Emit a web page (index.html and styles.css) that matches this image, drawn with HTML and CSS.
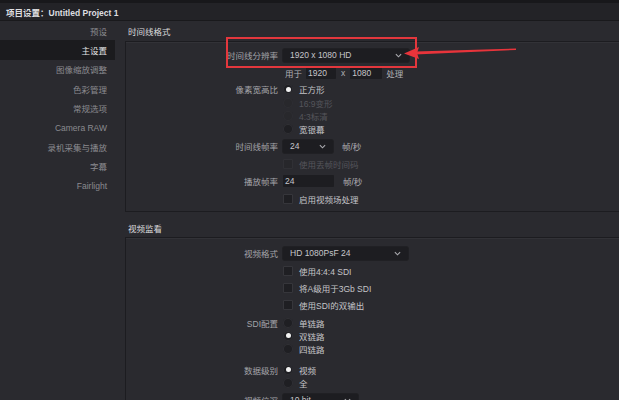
FILE: index.html
```html
<!DOCTYPE html>
<html lang="zh">
<head>
<meta charset="utf-8">
<link rel="stylesheet" href="styles.css">
</head>
<body>
<div class="app">
  <div class="topstrip"></div>
  <header class="titlebar"><span class="title">项目设置：Untitled Project 1</span></header>
  <div class="body">
    <nav class="sidebar">
      <div class="nav-item">预设</div>
      <div class="nav-item active">主设置</div>
      <div class="nav-item">图像缩放调整</div>
      <div class="nav-item">色彩管理</div>
      <div class="nav-item">常规选项</div>
      <div class="nav-item">Camera RAW</div>
      <div class="nav-item">录机采集与播放</div>
      <div class="nav-item">字幕</div>
      <div class="nav-item">Fairlight</div>
    </nav>
    <main class="content">
      <div class="section-head">时间线格式</div>
      <section class="panel panel-1">
        <div class="row h18">
          <div class="lbl">时间线分辨率</div>
          <div class="ctl"><div class="dd w126"><span>1920 x 1080 HD</span><svg class="chev" viewBox="0 0 8 5"><path d="M1 1 L4 4 L7 1"/></svg></div></div>
        </div>
        <div class="row h18">
          <div class="lbl"></div>
          <div class="ctl"><span class="txt pre">用于</span><div class="inp w30">1920</div><span class="txt x">x</span><div class="inp w32">1080</div><span class="txt post">处理</span></div>
        </div>
        <div class="row h14">
          <div class="lbl">像素宽高比</div>
          <div class="ctl"><span class="radio on"></span><span class="opt">正方形</span></div>
        </div>
        <div class="row h13">
          <div class="lbl"></div>
          <div class="ctl"><span class="radio dis"></span><span class="opt dim">16:9变形</span></div>
        </div>
        <div class="row h13">
          <div class="lbl"></div>
          <div class="ctl"><span class="radio dis"></span><span class="opt dim">4:3标清</span></div>
        </div>
        <div class="row h13">
          <div class="lbl"></div>
          <div class="ctl"><span class="radio"></span><span class="opt">宽银幕</span></div>
        </div>
        <div class="row h22">
          <div class="lbl">时间线帧率</div>
          <div class="ctl"><div class="dd w50"><span>24</span><svg class="chev" viewBox="0 0 8 5"><path d="M1 1 L4 4 L7 1"/></svg></div><span class="txt unit">帧/秒</span></div>
        </div>
        <div class="row h13">
          <div class="lbl"></div>
          <div class="ctl"><span class="check dis"></span><span class="opt dim">使用丢帧时间码</span></div>
        </div>
        <div class="row h22">
          <div class="lbl">播放帧率</div>
          <div class="ctl"><div class="inp w51">24</div><span class="txt unit">帧/秒</span></div>
        </div>
        <div class="row h14">
          <div class="lbl"></div>
          <div class="ctl"><span class="check"></span><span class="opt">启用视频场处理</span></div>
        </div>
      </section>
      <div class="section-head second">视频监看</div>
      <section class="panel panel-2">
        <div class="row h18">
          <div class="lbl">视频格式</div>
          <div class="ctl"><div class="dd w125"><span>HD 1080PsF 24</span><svg class="chev" viewBox="0 0 8 5"><path d="M1 1 L4 4 L7 1"/></svg></div></div>
        </div>
        <div class="row h17">
          <div class="lbl"></div>
          <div class="ctl"><span class="check"></span><span class="opt">使用4:4:4 SDI</span></div>
        </div>
        <div class="row h17">
          <div class="lbl"></div>
          <div class="ctl"><span class="check"></span><span class="opt">将A级用于3Gb SDI</span></div>
        </div>
        <div class="row h17">
          <div class="lbl"></div>
          <div class="ctl"><span class="check"></span><span class="opt">使用SDI的双输出</span></div>
        </div>
        <div class="row h13 gap3">
          <div class="lbl">SDI配置</div>
          <div class="ctl"><span class="radio"></span><span class="opt">单链路</span></div>
        </div>
        <div class="row h13">
          <div class="lbl"></div>
          <div class="ctl"><span class="radio on"></span><span class="opt">双链路</span></div>
        </div>
        <div class="row h13">
          <div class="lbl"></div>
          <div class="ctl"><span class="radio"></span><span class="opt">四链路</span></div>
        </div>
        <div class="row h13 gap8">
          <div class="lbl">数据级别</div>
          <div class="ctl"><span class="radio on"></span><span class="opt">视频</span></div>
        </div>
        <div class="row h13">
          <div class="lbl"></div>
          <div class="ctl"><span class="radio"></span><span class="opt">全</span></div>
        </div>
        <div class="row h18 gap2">
          <div class="lbl">视频位深</div>
          <div class="ctl"><div class="dd w75"><span>10 bit</span><svg class="chev" viewBox="0 0 8 5"><path d="M1 1 L4 4 L7 1"/></svg></div></div>
        </div>
      </section>
    </main>
  </div>
  <div class="annot-box"></div>
  <svg class="annot-arrow" viewBox="0 0 120 20" width="120" height="20">
    <polygon points="113,4.5 113,6 12,10.5 12,7.5" fill="#e8343b"/>
    <polygon points="1,9.5 16,3 14,9 16,15" fill="#e8343b"/>
  </svg>
</div>
</body>
</html>
```
FILE: styles.css
```css
* { box-sizing: border-box; }
html, body { margin: 0; padding: 0; }
body {
  width: 619px;
  height: 400px;
  overflow: hidden;
  background: #2a2a2f;
  font-family: "Liberation Sans", "Noto Sans CJK SC", sans-serif;
  font-size: 8.5px;
  color: #a8a8ad;
}
.app {
  position: relative;
  width: 619px;
  height: 400px;
  display: flex;
  flex-direction: column;
  overflow: hidden;
}
.topstrip { height: 3px; background: #18181b; flex: none; }
.titlebar {
  height: 18px;
  flex: none;
  background: #232327;
  border-bottom: 1px solid #19191c;
  display: flex;
  align-items: center;
  padding-left: 6px;
}
.title { color: #dedee0; font-weight: bold; font-size: 8.5px; }
.body { flex: 1; display: flex; min-height: 0; }
.sidebar { width: 115px; flex: none; display: flex; flex-direction: column; }
.nav-item {
  height: 19.4px;
  display: flex;
  align-items: center;
  justify-content: flex-end;
  padding-right: 8px;
  color: #8b8b90;
}
.nav-item.active { background: #1b1b1e; color: #e2e2e4; }
.content {
  flex: 1;
  padding-left: 10px;
  min-width: 0;
  display: flex;
  flex-direction: column;
}
.section-head {
  height: 20px;
  display: flex;
  align-items: center;
  padding-left: 3px;
  color: #dcdcde;
  flex: none;
}
.section-head.second { height: 25px; padding-top: 7px; }
.panel {
  border: 1px solid #1c1c20;
  box-shadow: inset 0 1px 0 #323237;
  margin-right: -6px;
  flex: none;
}
.panel-1 { padding: 4px 0 5px; }
.panel-2 { padding: 6px 0 0; flex: 1; }
.row {
  display: grid;
  grid-template-columns: 152px 1fr;
  column-gap: 5px;
  align-items: center;
}
.h13 { height: 13px; }
.h14 { height: 14px; }
.h17 { height: 17px; }
.h18 { height: 18px; }
.h22 { height: 22px; }
.gap2 { margin-top: 2px; }
.gap3 { margin-top: 3px; }
.gap8 { margin-top: 8px; }
.lbl { text-align: right; color: #a4a4a9; white-space: nowrap; }
.ctl { display: flex; align-items: center; white-space: nowrap; }
.dd {
  height: 13px;
  background: #1d1d21;
  border-radius: 2px;
  box-shadow: 0 0 0 1px #202024;
  display: flex;
  align-items: center;
  justify-content: space-between;
  padding: 0 7px 0 7px;
  color: #c6c6ca;
}
.w126 { width: 126px; }
.w125 { width: 125px; }
.w50 { width: 50px; }
.w75 { width: 75px; }
.chev { width: 7px; height: 5px; fill: none; stroke: #a9a9ae; stroke-width: 1.3; }
.inp {
  height: 12px;
  background: #1d1d21;
  border-radius: 1px;
  display: flex;
  align-items: center;
  padding-left: 2px;
  color: #c6c6ca;
}
.w30 { width: 30px; }
.w32 { width: 32px; }
.w51 { width: 51px; }
.txt { color: #b0b0b5; }
.pre { margin-left: 2px; margin-right: 4px; }
.x { margin: 0 5px 0 5px; }
.post { margin-left: 4px; }
.unit { margin-left: 9px; }
.radio {
  width: 10px;
  height: 10px;
  border-radius: 50%;
  background: #1f1f23;
  box-shadow: inset 0 0 0 1px #303035;
  flex: none;
  position: relative;
}
.radio.on::after {
  content: "";
  position: absolute;
  left: 2.5px;
  top: 2.5px;
  width: 5px;
  height: 5px;
  border-radius: 50%;
  background: #f2f2f2;
}
.radio.dis { background: #28282c; box-shadow: inset 0 0 0 1px #2e2e33; }
.check {
  width: 10px;
  height: 10px;
  background: #1f1f23;
  box-shadow: inset 0 0 0 1px #36363b;
  border-radius: 1px;
  flex: none;
}
.check.dis { background: #27272b; box-shadow: inset 0 0 0 1px #303035; }
.opt { margin-left: 6px; color: #c4c4c8; }
.opt.dim { color: #55555b; }
.annot-box {
  position: absolute;
  left: 226px;
  top: 37px;
  width: 191px;
  height: 31px;
  border: 2px solid #e3373d;
}
.annot-arrow {
  position: absolute;
  left: 403px;
  top: 44px;
}
```
